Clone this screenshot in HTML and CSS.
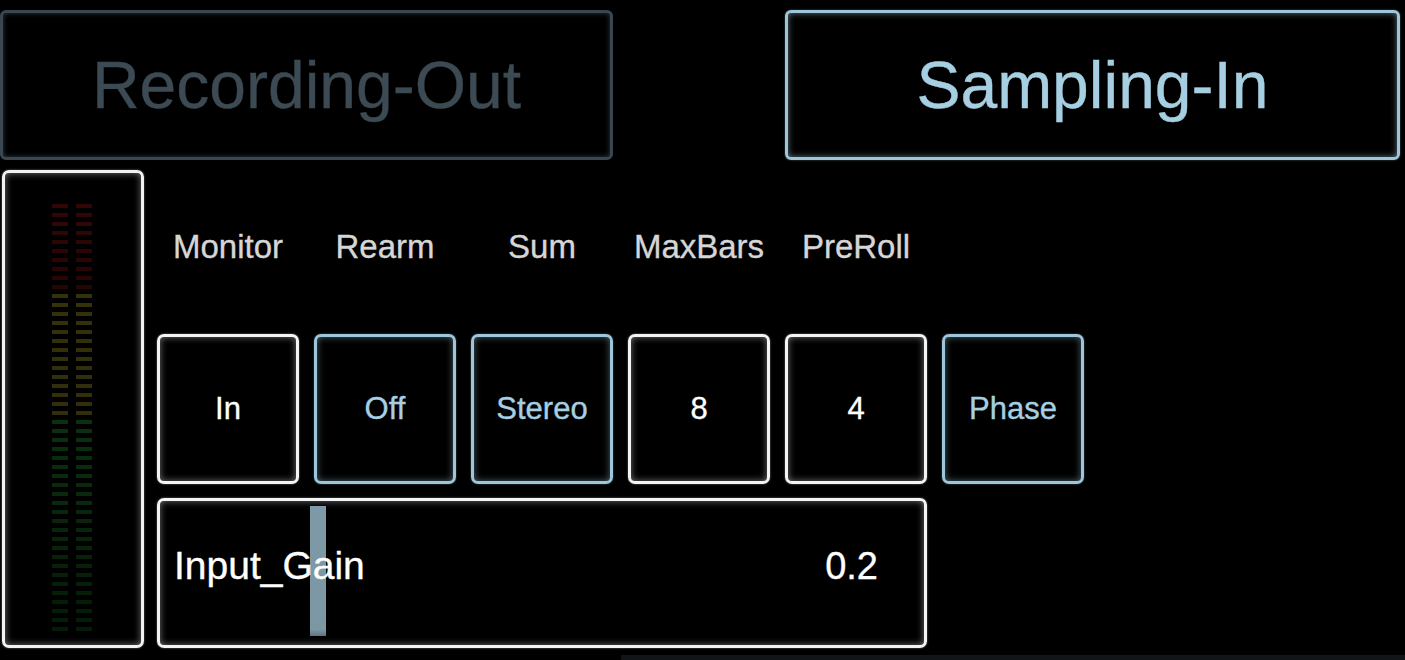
FILE: index.html
```html
<!DOCTYPE html>
<html lang="en">
<head>
    <meta charset="UTF-8">
    <title>Sampler</title>
    <link rel="stylesheet" href="styles.css">
</head>
<body>
    <div class="app">
        <!-- Mode switch -->
        <div class="modes">
            <div class="mode mode-off">Recording-Out</div>
            <div class="mode mode-on">Sampling-In</div>
        </div>

        <div class="main">
            <!-- Level meter -->
            <div class="meter">
                <div class="meter-col"></div>
                <div class="meter-col"></div>
            </div>

            <!-- Controls -->
            <div class="panel">
                <div class="labels">
                    <span>Monitor</span>
                    <span>Rearm</span>
                    <span>Sum</span>
                    <span>MaxBars</span>
                    <span>PreRoll</span>
                </div>

                <div class="buttons">
                    <div class="btn">In</div>
                    <div class="btn btn-blue">Off</div>
                    <div class="btn btn-blue">Stereo</div>
                    <div class="btn">8</div>
                    <div class="btn">4</div>
                    <div class="btn btn-blue">Phase</div>
                </div>

                <div class="slider">
                    <div class="handle" style="left: 20%;"></div>
                    <span class="slider-name">Input_Gain</span>
                    <span class="slider-value">0.2</span>
                </div>
            </div>
        </div>

        <div class="statusbar"></div>
    </div>
</body>
</html>
```

FILE: styles.css
```css
/* General */
* {
    box-sizing: border-box;
}

body {
    margin: 0;
    background-color: #000;
    font-family: "Liberation Sans", Arial, sans-serif;
    color: #fff;
    overflow: hidden;
    -webkit-text-stroke: 0.35px currentColor;
}

.app {
    width: 1405px;
    height: 660px;
}

/* Mode switch */
.modes {
    display: flex;
    justify-content: space-between;
    padding: 10px 5px 0 0;
}

.mode {
    height: 150px;
    display: flex;
    align-items: center;
    justify-content: center;
    font-size: 66px;
    border: 3px solid;
    border-radius: 6px;
}

.mode-off {
    width: 613px;
    color: #3c4a53;
    border-color: #3a4750;
    box-shadow: inset 0 0 5px rgba(80, 100, 112, 0.6);
}

.mode-on {
    width: 615px;
    color: #a6cfe2;
    border-color: #9ec6da;
    box-shadow: inset 0 0 6px rgba(158, 198, 218, 0.6), 0 0 2px rgba(158, 198, 218, 0.5);
}

/* Main area */
.main {
    display: flex;
    margin-top: 10px;
    padding-left: 2px;
    gap: 13px;
}

/* Meter */
.meter {
    width: 142px;
    height: 478px;
    border: 3px solid #f2f2f2;
    border-radius: 7px;
    box-shadow: inset 0 0 7px rgba(255, 255, 255, 0.45), 0 0 2px rgba(255, 255, 255, 0.5);
    display: flex;
    gap: 8px;
    padding: 31px 0 0 47px;
}

.meter-col {
    width: 16px;
    height: 432px;
    background:
        repeating-linear-gradient(to bottom, transparent 0 4px, #000 4px 9px),
        linear-gradient(to bottom,
            #300707 0, #270404 90px,
            #34320b 90px, #302e0c 216px,
            #0b3010 216px, #051a06 432px);
}

/* Panel */
.panel {
    width: 770px;
}

.labels {
    height: 152px;
    display: grid;
    grid-template-columns: repeat(5, 142px);
    column-gap: 15px;
    align-items: center;
    justify-items: center;
    font-size: 33px;
    line-height: 1;
    color: #d6d6d6;
}

.buttons {
    display: flex;
    gap: 15px;
    margin-top: 12px;
}

.btn {
    width: 142px;
    height: 150px;
    flex-shrink: 0;
    display: flex;
    align-items: center;
    justify-content: center;
    font-size: 31px;
    color: #fff;
    border: 3px solid #f4f4f4;
    border-radius: 7px;
    box-shadow: inset 0 0 7px rgba(255, 255, 255, 0.45), 0 0 2px rgba(255, 255, 255, 0.5);
}

.btn-blue {
    color: #a6cfe2;
    border-color: #9ec6da;
    box-shadow: inset 0 0 7px rgba(158, 198, 218, 0.5), 0 0 2px rgba(158, 198, 218, 0.5);
}

/* Slider */
.slider {
    position: relative;
    height: 150px;
    margin-top: 14px;
    display: flex;
    align-items: center;
    justify-content: space-between;
    padding: 0 46px 14px 14px;
    border: 3px solid #f4f4f4;
    border-radius: 7px;
    box-shadow: inset 0 0 7px rgba(255, 255, 255, 0.45), 0 0 2px rgba(255, 255, 255, 0.5);
}

.handle {
    position: absolute;
    top: 5px;
    width: 16px;
    height: 130px;
    margin-left: -3px;
    background: linear-gradient(to bottom, #7d9aa6 0, #7b97a3 95%, #5f7580 100%);
}

.slider-name,
.slider-value {
    position: relative;
}

.slider-name {
    font-size: 39px;
}

.slider-value {
    font-size: 38px;
}

/* Status bar */
.statusbar {
    height: 5px;
    margin: 7px 0 0 621px;
    background-color: #121517;
}
```
